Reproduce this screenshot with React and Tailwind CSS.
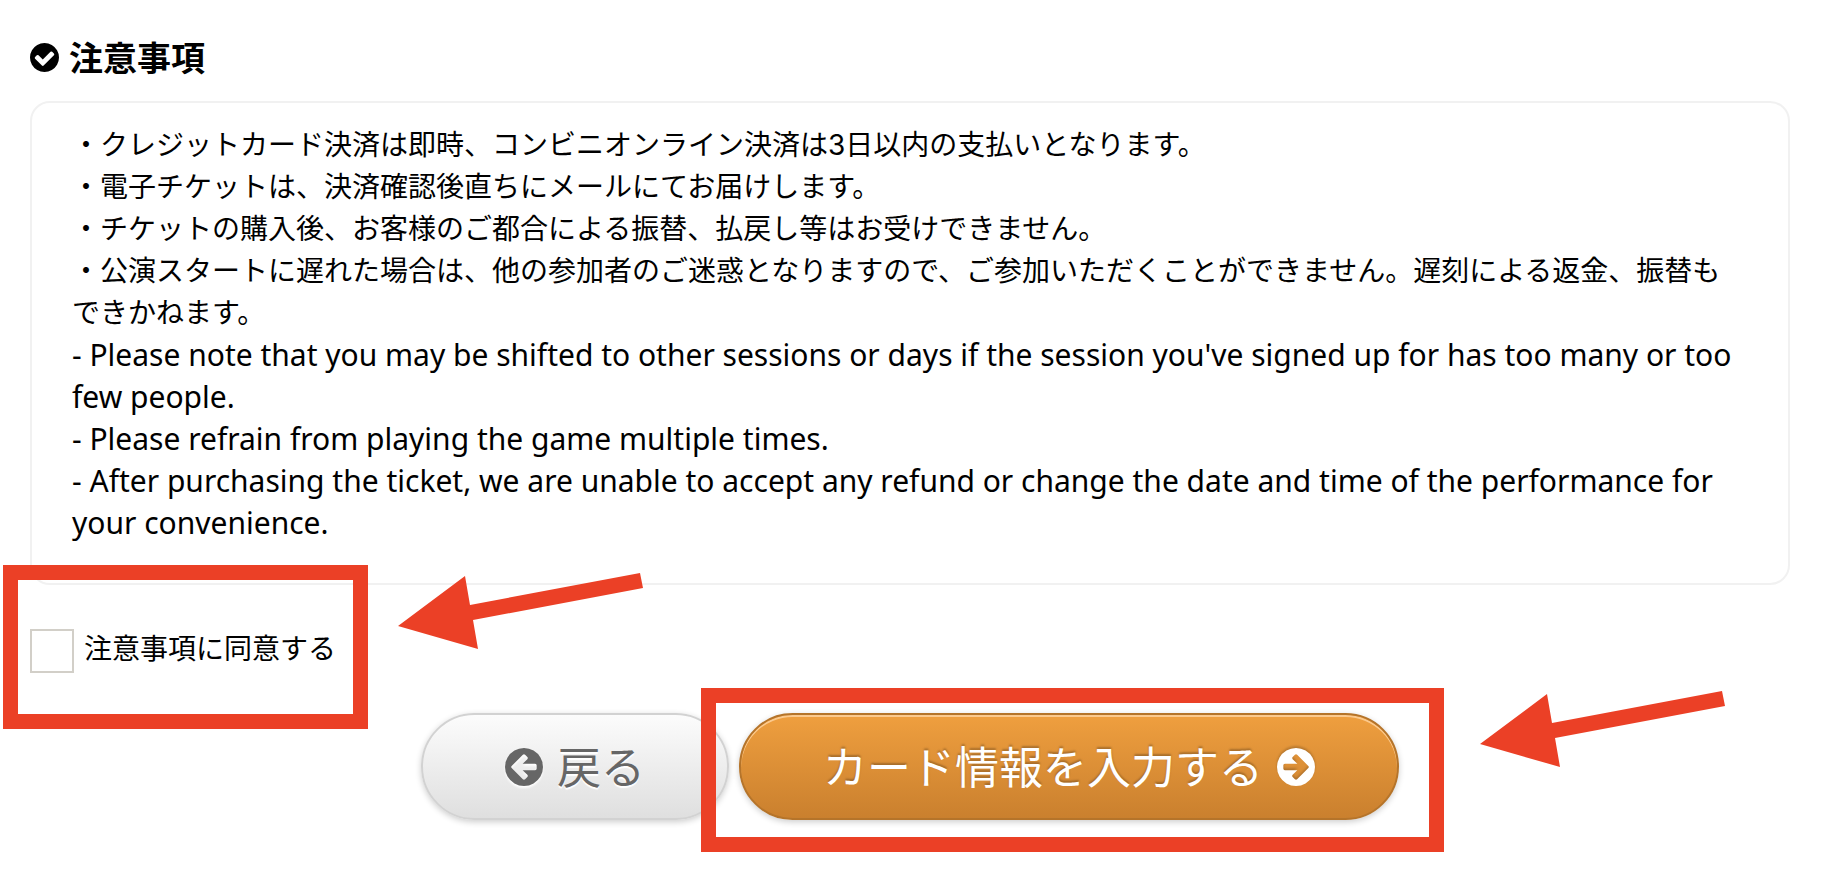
const notes = [
  '・クレジットカード決済は即時、コンビニオンライン決済は3日以内の支払いとなります。',
  '・電子チケットは、決済確認後直ちにメールにてお届けします。',
  '・チケットの購入後、お客様のご都合による振替、払戻し等はお受けできません。',
  '・公演スタートに遅れた場合は、他の参加者のご迷惑となりますので、ご参加いただくことができません。遅刻による返金、振替もできかねます。',
];

const notesEn = [
  "- Please note that you may be shifted to other sessions or days if the session you've signed up for has too many or too few people.",
  '- Please refrain from playing the game multiple times.',
  '- After purchasing the ticket, we are unable to accept any refund or change the date and time of the performance for your convenience.',
];

const CIRCLE =
  'M1664 896q0 209-103 385.5t-279.5 279.5-385.5 103-385.5-103-279.5-279.5-103-385.5 103-385.5 279.5-279.5 385.5-103 385.5 103 279.5 279.5 103 385.5z';
const CHECK =
  'M1412 734q0-28-18-46l-91-90q-19-19-45-19t-45 19l-408 407-226-226q-19-19-45-19t-45 19l-91 90q-18 18-18 46 0 27 18 45l362 362q19 19 45 19 27 0 46-19l543-543q18-18 18-45z';
const LEFT =
  'M1408 960v-128q0-26-19-45t-45-19h-502l189-189q19-19 19-45t-19-45l-91-91q-18-18-45-18t-45 18l-362 362-91 91q-18 18-18 45t18 45l91 91 362 362q18 18 45 18t45-18l91-91q18-18 18-45t-18-45l-189-189h502q26 0 45-19t19-45z';
const RIGHT =
  'M1413 896q0-27-18-45l-91-91-362-362q-18-18-45-18t-45 18l-91 91q-18 18-18 45t18 45l189 189h-502q-26 0-45 19t-19 45v128q0 26 19 45t45 19h502l-189 189q-19 19-19 45t19 45l91 91q18 18 45 18t45-18l362-362 91-91q18-18 18-45z';

function CircleIcon({ glyph, className }) {
  return (
    <svg viewBox="128 128 1536 1536" fill="currentColor" fillRule="evenodd" className={className} aria-hidden="true">
      <path d={`${CIRCLE} ${glyph}`} />
    </svg>
  );
}

function Arrow({ className }) {
  return (
    <svg viewBox="0 0 246 76" className={className} aria-hidden="true">
      <polygon points="0,52 67,2 72,31 242,-1 245,14 75,46 80,75" fill="#eb4026" />
    </svg>
  );
}

export default function App() {
  return (
    <main className="overflow-x-hidden bg-white pt-[33px] pr-10 pb-[74px] pl-[30px] font-['Noto_Sans_CJK_JP',sans-serif] text-[28px] leading-[42px] text-black">
      <h2 className="mb-5 flex items-center gap-[10px] text-[34px] leading-12 font-bold">
        <CircleIcon glyph={CHECK} className="size-[29px]" />
        注意事項
      </h2>

      <section className="rounded-[20px] border-2 border-[#f1f1f1] pt-[21px] pr-12 pb-[39px] pl-10">
        {notes.map((note) => (
          <p key={note} className="font-['Inter','Noto_Sans_CJK_JP',sans-serif]">{note}</p>
        ))}
        {notesEn.map((note) => (
          <p key={note} lang="en" className="font-['Noto_Sans',sans-serif] text-[30px]">{note}</p>
        ))}
      </section>

      <form onSubmit={(e) => e.preventDefault()}>
        <div className="relative mt-11 w-fit">
          <label className="flex items-start gap-[10px] leading-9">
            <input type="checkbox" className="size-11 appearance-none border-2 border-[#d2cfc8] bg-white checked:bg-[#ef9f3f]" />
            注意事項に同意する
          </label>
          <div className="pointer-events-none absolute -top-16 -left-[27px] h-[164px] w-[365px] border-[15px] border-[#eb4026]">
            <Arrow className="absolute -top-[6px] left-[380px] h-[76px] w-[246px] overflow-visible" />
          </div>
        </div>

        <div className="mt-10 flex justify-center gap-[10px] text-[44px] leading-[64px]">
          <button
            type="button"
            className="flex h-[107px] items-center gap-[14px] rounded-full border-2 border-[#d2d2d2] bg-linear-to-b from-[#fcfcfc] to-[#dfdfdf] px-[82px] text-[#666] shadow-[0_2px_6px_rgba(0,0,0,0.2)] text-shadow-[0_2px_1px_#fff]"
          >
            <CircleIcon glyph={LEFT} className="size-[38px] drop-shadow-[0_2px_1px_#fff]" />
            <span className="pb-1">戻る</span>
          </button>
          <div className="relative">
            <button
              type="submit"
              className="flex h-[107px] items-center gap-[14px] rounded-full border-2 border-[#b5742a] bg-linear-to-b from-[#ef9f3f] to-[#ca802e] px-[82px] text-white shadow-[0_2px_6px_rgba(0,0,0,0.2),inset_0_2px_0_#fbc98d] text-shadow-[0_-2px_2px_rgba(0,0,0,0.25)]"
            >
              <span className="pb-1">カード情報を入力する</span>
              <CircleIcon glyph={RIGHT} className="size-[38px] drop-shadow-[0_-2px_1px_rgba(0,0,0,0.2)]" />
            </button>
            <div className="pointer-events-none absolute -top-[25px] -right-[45px] -left-[38px] h-[164px] border-[15px] border-[#eb4026]">
              <Arrow className="absolute -top-[11px] left-[764px] h-[76px] w-[246px] overflow-visible" />
            </div>
          </div>
        </div>
      </form>
    </main>
  );
}
